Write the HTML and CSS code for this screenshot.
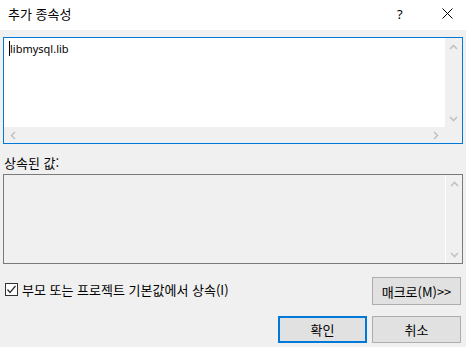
FILE: index.html
```html
<!DOCTYPE html>
<html lang="ko">
<head>
    <meta charset="UTF-8">
    <title>추가 종속성</title>
    <link rel="stylesheet" href="styles.css">
</head>
<body>
    <div class="dialog">
        <div class="titlebar">
            <span class="title">추가 종속성</span>
            <span class="help">?</span>
            <span class="close">
                <svg width="11" height="11" viewBox="0 0 11 11"><path d="M0.5 0.5 L10.5 10.5 M10.5 0.5 L0.5 10.5" stroke="#000" stroke-width="1"/></svg>
            </span>
        </div>
        <div class="content">
            <div class="editbox">
                <div class="edit-text"><span class="caret"></span>libmysql.lib</div>
                <div class="vscroll">
                    <svg class="arrow" width="9" height="6" viewBox="0 0 9 6"><polyline points="1,5 4.5,1.5 8,5" fill="none" stroke="#c2c2c2" stroke-width="1.6"/></svg>
                    <svg class="arrow" width="9" height="6" viewBox="0 0 9 6"><polyline points="1,1 4.5,4.5 8,1" fill="none" stroke="#c2c2c2" stroke-width="1.6"/></svg>
                </div>
                <div class="hscroll">
                    <svg class="arrow" width="6" height="9" viewBox="0 0 6 9"><polyline points="5,1 1.5,4.5 5,8" fill="none" stroke="#c2c2c2" stroke-width="1.6"/></svg>
                    <svg class="arrow" width="6" height="9" viewBox="0 0 6 9"><polyline points="1,1 4.5,4.5 1,8" fill="none" stroke="#c2c2c2" stroke-width="1.6"/></svg>
                </div>
                <div class="corner"></div>
            </div>

            <div class="label">상속된 값:</div>

            <div class="inherited">
                <div class="inherited-text"></div>
                <div class="vscroll light">
                    <svg class="arrow" width="9" height="6" viewBox="0 0 9 6"><polyline points="1,5 4.5,1.5 8,5" fill="none" stroke="#c2c2c2" stroke-width="1.6"/></svg>
                    <svg class="arrow" width="9" height="6" viewBox="0 0 9 6"><polyline points="1,1 4.5,4.5 8,1" fill="none" stroke="#c2c2c2" stroke-width="1.6"/></svg>
                </div>
            </div>

            <div class="option-row">
                <label class="check">
                    <span class="box">
                        <svg width="11" height="11" viewBox="0 0 11 11"><polyline points="1.5,5.5 4,8.5 9.5,2" fill="none" stroke="#333" stroke-width="1.3"/></svg>
                    </span>
                    부모 또는 프로젝트 기본값에서 상속(I)
                </label>
                <button class="btn">매크로(M)&gt;&gt;</button>
            </div>

            <div class="button-row">
                <button class="btn default">확인</button>
                <button class="btn">취소</button>
            </div>
        </div>
    </div>
</body>
</html>
```

FILE: styles.css
```css
body {
    margin: 0;
    background-color: #f0f0f0;
    font-family: "Noto Sans CJK KR", sans-serif;
    font-size: 13px;
    color: #000;
}
.dialog {
    width: 466px;
    height: 347px;
    overflow: hidden;
}
.titlebar {
    height: 30px;
    background: #fff;
    display: flex;
    align-items: center;
    padding-left: 8px;
}
.title {
    flex: 1;
    line-height: 16px;
    margin-top: -2px;
}
.help {
    width: 10px;
    font-family: "Noto Sans", sans-serif;
    font-size: 13px;
    margin-right: 35px;
    margin-top: -2px;
}
.close {
    display: flex;
    margin-right: 13px;
    margin-top: -3px;
}
.content {
    padding: 7px 3px 0 3px;
}
.editbox {
    height: 107px;
    box-sizing: border-box;
    border: 1px solid #0078d7;
    display: grid;
    grid-template-columns: 1fr 17px;
    grid-template-rows: 1fr 16px;
}
.edit-text {
    background: #fff;
    padding: 3px 0 0 5px;
    line-height: 15px;
    font-family: "Noto Sans", sans-serif;
    font-size: 11px;
    display: flex;
    align-items: flex-start;
}
.caret {
    width: 1px;
    height: 15px;
    background: #000;
}
.vscroll {
    background: #f0f0f0;
    display: flex;
    flex-direction: column;
    justify-content: space-between;
    align-items: center;
    padding: 6px 0 5px;
}
.vscroll.light {
    border-left: 1px solid #fff;
}
.hscroll {
    background: #f0f0f0;
    display: flex;
    justify-content: space-between;
    align-items: center;
    padding: 0 6px 0 6px;
}
.corner {
    background: #f0f0f0;
}
.arrow {
    display: block;
}
.label {
    margin: 11px 0 0 1px;
    line-height: 16px;
    height: 19px;
}
.inherited {
    height: 90px;
    box-sizing: border-box;
    border: 1px solid #7a7a7a;
    display: grid;
    grid-template-columns: 1fr 17px;
}
.option-row {
    display: flex;
    align-items: center;
    justify-content: space-between;
    margin-top: 13px;
    padding-right: 2px;
}
.check {
    display: flex;
    align-items: center;
    gap: 4px;
    padding-left: 2px;
    margin-top: -3px;
}
.box {
    width: 13px;
    height: 13px;
    box-sizing: border-box;
    border: 1px solid #333;
    background: #fff;
    display: flex;
    align-items: center;
    justify-content: center;
}
.btn {
    width: 89px;
    height: 28px;
    box-sizing: border-box;
    border: 1px solid #adadad;
    background: #e1e1e1;
    font-family: "Noto Sans CJK KR", sans-serif;
    font-size: 13px;
    padding: 0;
    color: #000;
}
.btn.default {
    border: 2px solid #0078d7;
}
.button-row {
    display: flex;
    justify-content: flex-end;
    gap: 5px;
    margin-top: 11px;
    padding-right: 2px;
}
.button-row .btn {
    height: 27px;
}
```
